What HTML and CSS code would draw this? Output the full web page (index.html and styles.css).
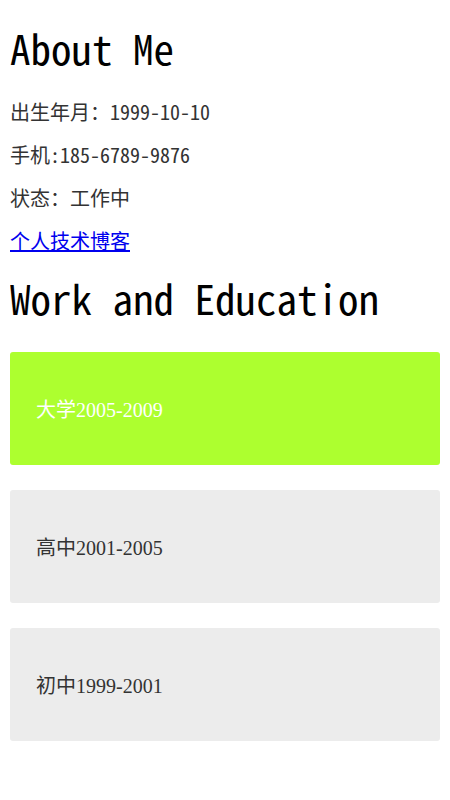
FILE: index.html
```html
<!DOCTYPE html>
<html lang="zh-CN">
<head>
<meta charset="utf-8">
<title>About Me</title>
<link rel="stylesheet" href="styles.css">
</head>
<body>
<h1 class="title title-first">About Me</h1>
<p class="info">出生年月：1999-10-10</p>
<p class="info">手机:185-6789-9876</p>
<p class="info">状态：工作中</p>
<p class="info"><a class="blog" href="#">个人技术博客</a></p>
<h1 class="title">Work and Education</h1>
<div class="cards">
  <div class="card card-active">大学2005-2009</div>
  <div class="card">高中2001-2005</div>
  <div class="card">初中1999-2001</div>
</div>
</body>
</html>
```
FILE: styles.css
```css
body {
  margin: 10px;
  font-family: "Noto Sans Mono CJK SC", "Liberation Mono", "Noto Sans CJK SC", monospace;
  font-size: 20px;
  color: #333;
  background: #fff;
}
.title {
  font-family: "Noto Sans Mono CJK SC", "Liberation Mono", monospace;
  font-size: 41px;
  font-weight: normal;
  line-height: 46px;
  color: #000;
  margin: 22px 0 30px;
}
.title-first {
  margin-top: 14px;
}
.info {
  margin: 20px 0;
  line-height: 23px;
}
.blog {
  color: #0000ee;
}
.cards {
  display: flex;
  flex-direction: column;
  gap: 25px;
  margin-top: 32px;
}
.card {
  height: 113px;
  box-sizing: border-box;
  padding: 0 26px;
  display: flex;
  align-items: center;
  background: #ececec;
  border-radius: 3px;
  font-family: "Liberation Serif", "Noto Sans CJK SC", serif;
  font-size: 20px;
  color: #333;
}
.card-active {
  background: #adff2f;
  color: #fff;
}
```
